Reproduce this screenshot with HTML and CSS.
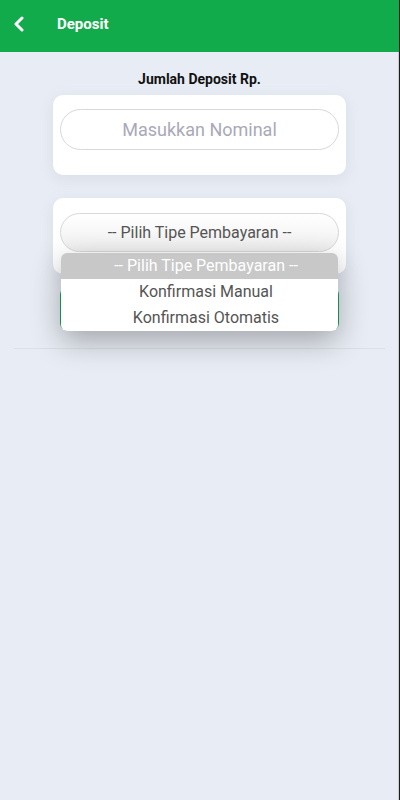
FILE: index.html
```html
<!DOCTYPE html>
<html lang="id">
<head>
<meta charset="utf-8">
<title>Deposit</title>
<link rel="stylesheet" href="styles.css">
</head>
<body>
<div class="app">
  <header class="topbar">
    <svg class="back" width="14" height="16" viewBox="0 0 14 16"><path d="M10 2 L4 8 L10 14" fill="none" stroke="#fff" stroke-width="3" stroke-linecap="round" stroke-linejoin="round"/></svg>
    <h1 class="title">Deposit</h1>
  </header>
  <main class="content">
    <p class="label">Jumlah Deposit Rp.</p>
    <div class="card">
      <div class="field placeholder">Masukkan Nominal</div>
    </div>
    <div class="card card-select">
      <div class="field select">-- Pilih Tipe Pembayaran --</div>
      <ul class="dropdown">
        <li class="opt active">-- Pilih Tipe Pembayaran --</li>
        <li class="opt">Konfirmasi Manual</li>
        <li class="opt">Konfirmasi Otomatis</li>
      </ul>
    </div>
    <div class="btn-row"><button class="btn"></button></div>
    <hr class="sep">
  </main>
</div>
</body>
</html>
```
FILE: styles.css
```css
html, body { margin: 0; padding: 0; }
body {
  font-family: Roboto, "Noto Sans", sans-serif;
  background: #e8ecf4;
}
.app {
  min-height: 800px;
  box-sizing: border-box;
  border-right: 1px solid #1e1e1e;
  box-shadow: inset -1px 0 0 #c9ccd2;
}
.topbar {
  height: 52px;
  background: #12ab4c;
  display: flex;
  align-items: center;
  padding: 0 0 4px 12px;
  box-sizing: border-box;
}
.back { display: block; }
.title {
  margin: 0 0 0 31px;
  color: #fff;
  font-size: 15px;
  font-weight: 700;
}
.content {
  padding: 0 13px;
  display: flex;
  flex-direction: column;
  align-items: center;
}
.label {
  margin: 19px 0 8px;
  font-size: 14px;
  font-weight: 700;
  color: #111;
  line-height: 16px;
}
.card {
  width: 293px;
  box-sizing: border-box;
  background: #fff;
  border-radius: 10px;
  padding: 14px 7px 25px;
  box-shadow: 0 4px 14px rgba(150, 160, 180, 0.18);
}
.card-select {
  margin-top: 23px;
  padding: 15px 7px 22px;
  position: relative;
}
.field {
  height: 41px;
  box-sizing: border-box;
  border: 1px solid #d8d8d8;
  border-radius: 21px;
  display: flex;
  align-items: center;
  justify-content: center;
}
.placeholder {
  font-size: 18px;
  color: #a9a9b8;
}
.select {
  height: 39px;
  font-size: 16px;
  color: #555;
  background: linear-gradient(#ffffff, #efefef);
}
.dropdown {
  position: absolute;
  left: 8px;
  top: 55px;
  width: 277px;
  margin: 0;
  padding: 0;
  list-style: none;
  background: #fff;
  border-radius: 6px;
  overflow: hidden;
  box-shadow: 0 10px 30px rgba(0, 0, 0, 0.3);
  z-index: 2;
}
.opt {
  height: 26px;
  line-height: 26px;
  text-align: center;
  padding-left: 13px;
  font-size: 16px;
  color: #555;
}
.opt.active {
  background: #c8c8c8;
  color: #fff;
}
.btn-row { width: 279px; margin-top: 13px; }
.btn {
  display: block;
  width: 100%;
  height: 44px;
  border: 0;
  border-radius: 8px;
  background: #12ab4c;
}
.sep {
  width: 371px;
  margin: 17px 0 0;
  border: 0;
  border-top: 1px solid #dcdfe6;
}
```
